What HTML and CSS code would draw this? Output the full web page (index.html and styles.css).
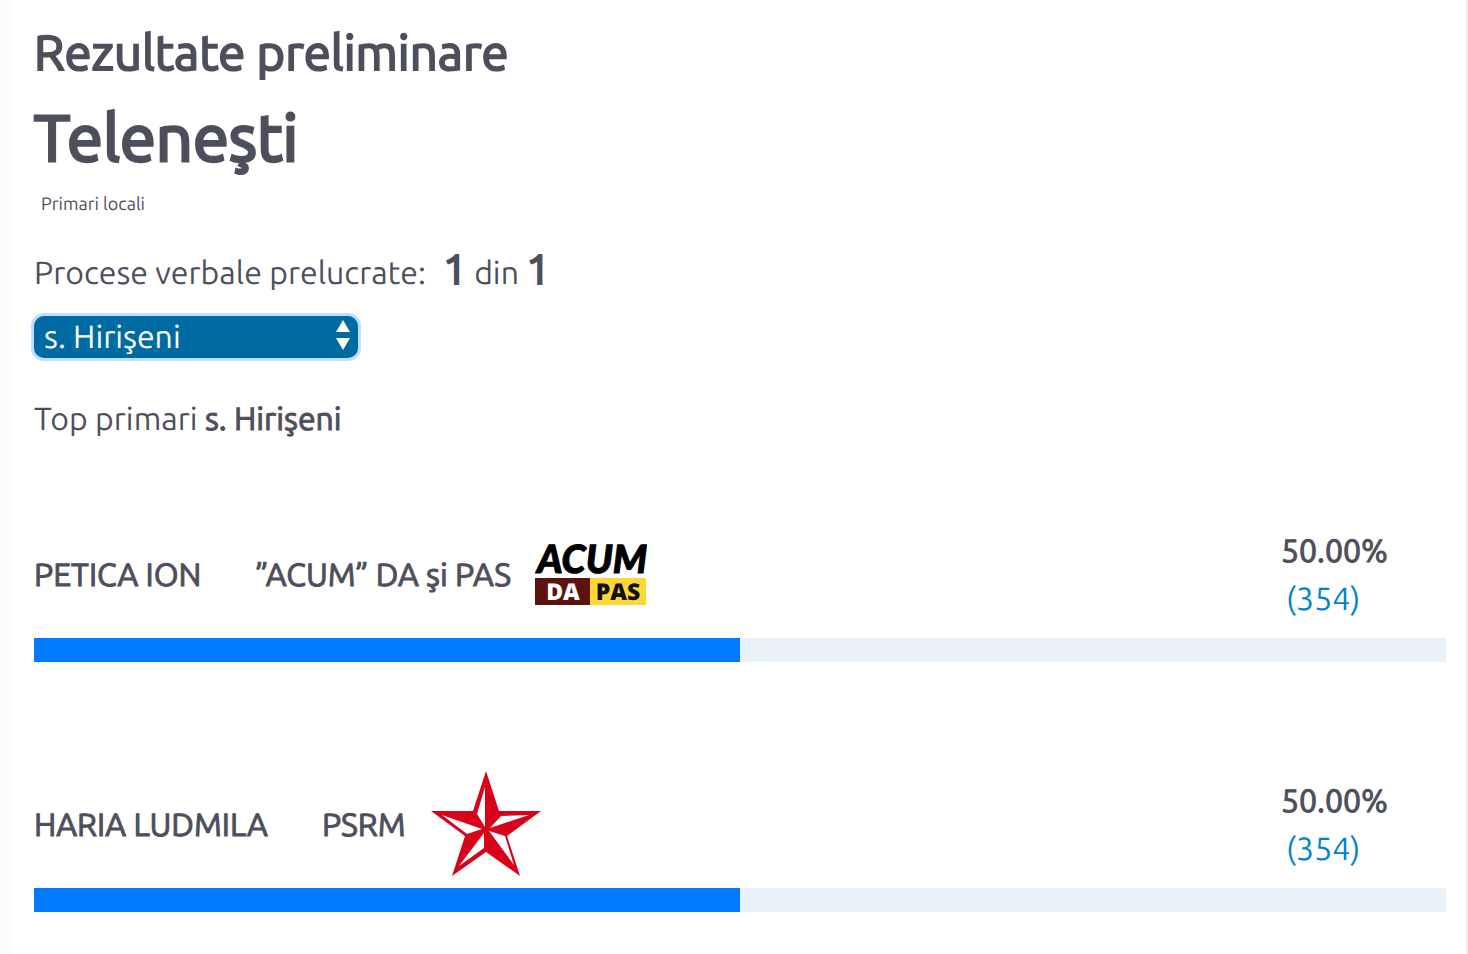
FILE: index.html
```
<!DOCTYPE html>
<html lang="en">
<head>
    <meta charset="UTF-8">
    <title>Rezultate preliminare</title>
    <link rel="stylesheet" href="styles.css">
</head>
<body>
    <div class="main">
        <h2 class="title">Rezultate preliminare</h2>
        <h1 class="region">Teleneşti</h1>
        <p class="type">Primari locali</p>
        <p class="processed">Procese verbale prelucrate: <b class="first">1</b> din <b>1</b></p>
        <div class="select-box">
            <select class="place" aria-label="Localitate">
                <option>s. Hirişeni</option>
            </select>
            <svg class="arrows" width="16" height="30" viewBox="0 0 16 30">
                <path d="M8 0L15 12H1zM8 30L1 18H15z" fill="#fff"/>
            </svg>
        </div>
        <p class="top">Top primari <b>s. Hirişeni</b></p>
        <ul class="results">
            <li>
                <div class="row">
                    <span class="name">PETICA ION</span>
                    <span class="party">”ACUM” DA şi PAS</span>
                    <svg class="logo" width="112" height="112" viewBox="0 0 112 112">
                        <text class="logo-acum" x="2" y="54" font-size="39">ACUM</text>
                        <rect x="0" y="59" width="55" height="27" fill="#5c120f"/>
                        <rect x="55" y="59" width="56" height="27" fill="#fdd835"/>
                        <text class="logo-small" x="28" y="81" font-size="23" fill="#fff">DA</text>
                        <text class="logo-small" x="83" y="81" font-size="23" fill="#111">PAS</text>
                    </svg>
                    <div class="score">
                        <b>50.00%</b>
                        <a href="#">(354)</a>
                    </div>
                </div>
                <div class="bar"><div class="fill" style="width:50%"></div></div>
            </li>
            <li>
                <div class="row">
                    <span class="name">HARIA LUDMILA</span>
                    <span class="party">PSRM</span>
                    <svg class="logo" width="112" height="112" viewBox="0 0 112 112">
                        <path d="M56 2L69 42H111L77 67L90 107L56 83L22 107L35 67L1 42H43z" fill="#d9021b"/>
                        <path d="M55 18V58L47 45z" fill="#fff"/>
                        <path d="M60 59L71 47L99 46z" fill="#fff"/>
                        <path d="M59 62L75 67L84 96z" fill="#fff"/>
                        <path d="M54 64V79L29 97z" fill="#fff"/>
                        <path d="M52 60L37 65L12 46z" fill="#fff"/>
                    </svg>
                    <div class="score">
                        <b>50.00%</b>
                        <a href="#">(354)</a>
                    </div>
                </div>
                <div class="bar"><div class="fill" style="width:50%"></div></div>
            </li>
        </ul>
    </div>
</body>
</html>
```
FILE: styles.css
```
*{
    padding:0;
    margin:0;
    box-sizing: border-box;
}
body{
    background: #fcfcfc;
    color:#4d4f5c;
    font-family: Ubuntu, "Noto Sans", sans-serif;
    font-size:32px;
    line-height:48px;
    text-rendering: geometricPrecision;
}
b,
.name,
.party{
    font-weight: 400;
    -webkit-text-stroke: 1px #4d4f5c;
}
.main{
    min-height:100vh;
    margin-left:12px;
    padding:18px 20px 0 22px;
    background: #fff;
    border-right:2px solid #eee;
}
.title,
.region{
    font-weight: 400;
    -webkit-text-stroke: 2px #4d4f5c;
}
.title{
    font-size:49px;
    line-height:70px;
}
.region{
    font-size:65px;
    line-height:100px;
    -webkit-text-stroke-width: 3px;
}
.type{
    padding-left:7px;
    font-size:18px;
    line-height:32px;
}
.processed{
    margin-top:25px;
}
.processed b{
    font-size:42px;
    -webkit-text-stroke-width: 2px;
}
.processed .first{
    margin-left:10px;
}
.select-box{
    position:relative;
    width:324px;
    margin-top:19px;
}
.place{
    display: block;
    width:100%;
    height:42px;
    padding:0 10px;
    border:0;
    border-radius: 10px;
    outline:0;
    appearance: none;
    background-color: #006ba3;
    box-shadow: 0 0 0 3px #bfdeff;
    color:#fff;
    font-family: inherit;
    font-size:32px;
    line-height:42px;
    text-rendering: inherit;
}
.arrows{
    position:absolute;
    top:4px;
    right:7px;
    pointer-events: none;
}
.top{
    margin-top:37px;
}
.results{
    list-style: none;
    margin-top:77px;
}
.results li{
    margin-bottom:108px;
}
.row{
    display: flex;
    align-items: center;
    height:118px;
    padding-bottom:8px;
}
.party{
    margin-left:54px;
}
.logo{
    margin-left:24px;
}
.logo-acum{
    font-family: Lato, sans-serif;
    font-weight: 900;
    font-style: italic;
    stroke:#000;
    stroke-width:1px;
}
.logo-small{
    font-family: "Open Sans", sans-serif;
    font-weight: 800;
    text-anchor: middle;
}
.score{
    width:165px;
    margin-left:auto;
}
.score b,
.score a{
    display: block;
}
.score a{
    padding-left:5px;
    color:#0083ca;
    text-decoration: none;
}
.bar{
    height:24px;
    background: #e9f1fa;
}
.fill{
    height:24px;
    background: #007bff;
}
```
